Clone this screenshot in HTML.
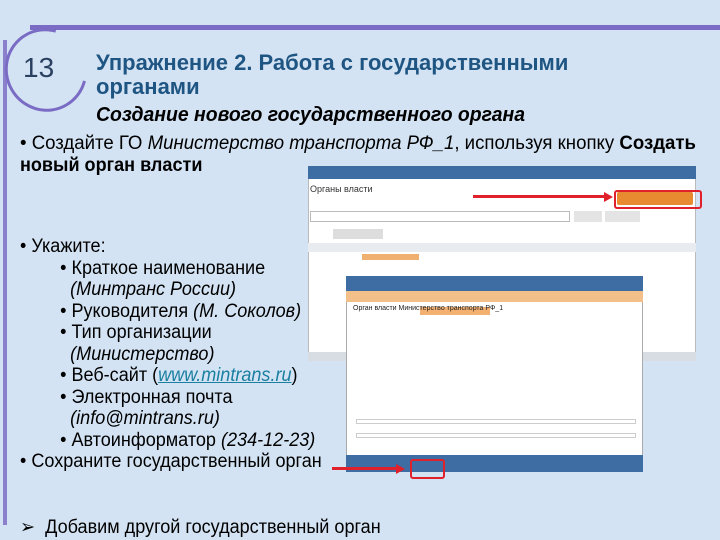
<!DOCTYPE html>
<html><head><meta charset="utf-8"><style>
*{margin:0;padding:0;box-sizing:border-box}
body{width:720px;height:540px;overflow:hidden;background:#d3e3f3;font-family:"Liberation Sans","DejaVu Sans",sans-serif;position:relative;color:#000}
.a{position:absolute;white-space:nowrap}
.t{font-size:19px;line-height:22px;transform:scaleX(0.95);transform-origin:0 0}
</style></head><body>
<div class="a" style="left:30px;top:25px;width:690px;height:5px;background:#7a6cc4"></div>
<div class="a" style="left:3px;top:40px;width:4px;height:485px;background:#8a80cc"></div>
<div class="a" style="left:5px;top:28px;width:82px;height:84px;border:3px solid #7a6cc4;border-radius:50%;border-right-color:transparent;transform:rotate(-30deg)"></div>
<div class="a" style="left:23px;top:52px;font-size:28px;color:#2a4060">13</div>
<div class="a" style="left:96px;top:51px;font-size:22px;line-height:24px;color:#1f5582;font-weight:bold">Упражнение 2. Работа с государственными<br>органами</div>
<div class="a" style="left:96px;top:104px;font-size:20px;font-weight:bold;font-style:italic;transform:scaleX(0.97);transform-origin:0 0">Создание нового государственного органа</div>
<div class="a t" style="left:20px;top:133px;transform:scaleX(0.98)">• Создайте ГО <i>Министерство транспорта РФ_1</i>, используя кнопку <b>Создать</b></div>
<div class="a t" style="left:20px;top:155px"><b>новый орган власти</b></div>
<div class="a t" style="left:20px;top:236px;line-height:21.5px">• Укажите:<br>
&nbsp;&nbsp;&nbsp;&nbsp;&nbsp;&nbsp;&nbsp;&nbsp;• Краткое наименование<br>
&nbsp;&nbsp;&nbsp;&nbsp;&nbsp;&nbsp;&nbsp;&nbsp;&nbsp;&nbsp;<i>(Минтранс России)</i><br>
&nbsp;&nbsp;&nbsp;&nbsp;&nbsp;&nbsp;&nbsp;&nbsp;• Руководителя <i>(М. Соколов)</i><br>
&nbsp;&nbsp;&nbsp;&nbsp;&nbsp;&nbsp;&nbsp;&nbsp;• Тип организации<br>
&nbsp;&nbsp;&nbsp;&nbsp;&nbsp;&nbsp;&nbsp;&nbsp;&nbsp;&nbsp;<i>(Министерство)</i><br>
&nbsp;&nbsp;&nbsp;&nbsp;&nbsp;&nbsp;&nbsp;&nbsp;• Веб-сайт (<i style="color:#1a7fa0;text-decoration:underline">www.mintrans.ru</i>)<br>
&nbsp;&nbsp;&nbsp;&nbsp;&nbsp;&nbsp;&nbsp;&nbsp;• Электронная почта<br>
&nbsp;&nbsp;&nbsp;&nbsp;&nbsp;&nbsp;&nbsp;&nbsp;&nbsp;&nbsp;<i>(info@mintrans.ru)</i><br>
&nbsp;&nbsp;&nbsp;&nbsp;&nbsp;&nbsp;&nbsp;&nbsp;• Автоинформатор <i>(234-12-23)</i><br>
• Сохраните государственный орган</div>
<div class="a t" style="left:20px;top:517px">➢ &nbsp;Добавим другой государственный орган</div>

<!-- back window -->
<div class="a" style="left:308px;top:166px;width:388px;height:195px;background:#fff;border:1px solid #bbb"></div>
<div class="a" style="left:308px;top:166px;width:388px;height:13px;background:#3d6da3"></div>
<div class="a" style="left:308px;top:352px;width:388px;height:9px;background:#d8dde4"></div>
<div class="a" style="left:310px;top:184px;font-size:9px;color:#333">Органы власти</div>
<div class="a" style="left:617px;top:192px;width:76px;height:13px;background:#e88a30;border-radius:2px"></div>
<div class="a" style="left:614px;top:190px;width:88px;height:19px;border:2px solid #e0202a;border-radius:3px"></div>
<div class="a" style="left:473px;top:195px;width:133px;height:3px;background:#e0202a"></div>
<div class="a" style="left:604px;top:192px;border-left:9px solid #e0202a;border-top:5px solid transparent;border-bottom:5px solid transparent"></div>
<div class="a" style="left:310px;top:211px;width:260px;height:11px;border:1px solid #bbb;background:#fff"></div>
<div class="a" style="left:574px;top:211px;width:28px;height:11px;background:#e4e4e4"></div>
<div class="a" style="left:605px;top:211px;width:35px;height:11px;background:#e4e4e4"></div>
<div class="a" style="left:333px;top:229px;width:50px;height:10px;background:#ddd"></div>
<div class="a" style="left:308px;top:243px;width:388px;height:9px;background:#e8ecf0"></div>
<div class="a" style="left:362px;top:254px;width:57px;height:6px;background:#f0b070"></div>

<!-- front window -->
<div class="a" style="left:346px;top:276px;width:297px;height:196px;background:#fff;border:1px solid #aaa"></div>
<div class="a" style="left:346px;top:276px;width:297px;height:15px;background:#3d6da3"></div>
<div class="a" style="left:346px;top:291px;width:297px;height:11px;background:#f3c08a"></div>
<div class="a" style="left:420px;top:307px;width:70px;height:8px;background:#f3b070"></div>
<div class="a" style="left:353px;top:305px;font-size:7px;color:#222">Орган власти Министерство транспорта РФ_1</div>
<div class="a" style="left:346px;top:455px;width:297px;height:17px;background:#3d6da3"></div>
<div class="a" style="left:356px;top:419px;width:280px;height:5px;border:1px solid #ccc"></div>
<div class="a" style="left:356px;top:433px;width:280px;height:5px;border:1px solid #ccc"></div>
<div class="a" style="left:410px;top:459px;width:35px;height:20px;border:2px solid #e0202a;border-radius:3px"></div>
<div class="a" style="left:332px;top:467px;width:66px;height:3px;background:#e0202a"></div>
<div class="a" style="left:396px;top:464px;border-left:9px solid #e0202a;border-top:5px solid transparent;border-bottom:5px solid transparent"></div>
</body></html>
